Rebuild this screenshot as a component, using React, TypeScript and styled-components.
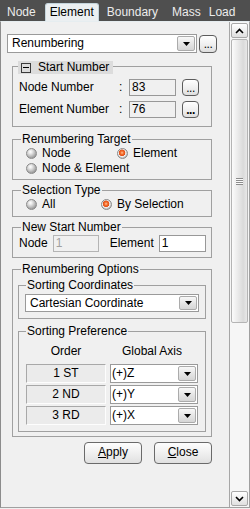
import React from "react";
import styled, { createGlobalStyle } from "styled-components";

const GlobalStyle = createGlobalStyle`
  html, body { margin: 0; padding: 0; }
  body {
    background: #f0f0f0;
    font-family: "Liberation Sans", Arial, sans-serif;
    font-size: 12px;
    color: #000;
  }
  * { box-sizing: border-box; }
`;

const Window = styled.div`
  width: 250px;
  height: 509px;
  display: flex;
  flex-direction: column;
  background: #f0f0f0;
  overflow: hidden;
`;

const TabBar = styled.div`
  height: 21px;
  flex: none;
  display: flex;
  align-items: flex-end;
  background: #4f4f4f;
`;

const Tab = styled.div<{ $active?: boolean; $ml: number }>`
  height: 18px;
  flex: none;
  margin-left: ${(p) => p.$ml}px;
  padding: 0 4px;
  line-height: 17px;
  white-space: nowrap;
  border: 1px solid ${(p) => (p.$active ? "#c4d4db" : "transparent")};
  border-bottom: 0;
  border-radius: 3px 3px 0 0;
  background: ${(p) => (p.$active ? "#ebeff1" : "transparent")};
  color: ${(p) => (p.$active ? "#000" : "#ececec")};
`;

const Panel = styled.div`
  height: 487px;
  flex: none;
  display: flex;
  border: 1px solid #a0a0a0;
  border-top-color: #e6edf0;
  border-left-color: #8c8c8c;
`;

const Content = styled.div`
  flex: 1;
  min-width: 0;
  padding: 12px 0 0 6px;
  display: flex;
  flex-direction: column;
  align-items: flex-start;
`;

const TopRow = styled.div`
  display: flex;
  align-items: center;
  gap: 2px;
`;

const Combo = styled.div<{ $h: number; $w?: number }>`
  display: flex;
  height: ${(p) => p.$h}px;
  width: ${(p) => (p.$w ? `${p.$w}px` : "auto")};
  border: 1px solid #9a9a9a;
  background: #fff;
  padding: 1px;
`;

const ComboText = styled.span<{ $pl: number }>`
  flex: 1;
  display: flex;
  align-items: center;
  padding-left: ${(p) => p.$pl}px;
  line-height: 15px;
  white-space: nowrap;
  overflow: hidden;
`;

const DropBtn = styled.span`
  width: 18px;
  flex: none;
  display: flex;
  align-items: center;
  justify-content: center;
  border: 1px solid #ababab;
  border-radius: 2px;
  background: linear-gradient(#f8f8f8, #e4e4e4 55%, #d6d6d6);
`;

const DownArrow = () => (
  <svg width="7" height="4" viewBox="0 0 7 4">
    <polygon points="0,0 7,0 3.5,4" fill="#000" />
  </svg>
);

const DotsBtn = styled.span<{ $size: number; $focus?: boolean }>`
  width: ${(p) => p.$size}px;
  height: ${(p) => p.$size}px;
  display: flex;
  align-items: center;
  justify-content: center;
  border: 1px solid #5c5c5c;
  border-radius: 4px;
  background: linear-gradient(#ffffff, #efefef 55%, #dedede);
  line-height: 14px;
  font-size: 12px;
  font-weight: ${(p) => (p.$focus ? 700 : 400)};
  letter-spacing: -0.5px;
`;

const Groups = styled.div`
  width: 200px;
  margin-left: 5px;
  display: flex;
  flex-direction: column;
`;

const Group = styled.div<{ $mt?: number; $pb?: number; $mx?: number }>`
  display: flex;
  flex-direction: column;
  border: 1px solid #a0a0a0;
  margin: ${(p) => p.$mt ?? 0}px ${(p) => p.$mx ?? 0}px 0;
  padding-bottom: ${(p) => p.$pb ?? 0}px;
`;

const Legend = styled.div<{ $ml?: number }>`
  align-self: flex-start;
  height: 14px;
  line-height: 14px;
  margin: -8px 0 0 ${(p) => p.$ml ?? 8}px;
  padding: 0 1px;
  background: #f0f0f0;
  white-space: nowrap;
`;

const HeadLegend = styled.div`
  align-self: flex-start;
  display: flex;
  align-items: center;
  height: 13px;
  line-height: 13px;
  margin: -6px 0 0 5px;
  padding: 0 4px 0 3px;
  background: #dcdcdc;
  white-space: nowrap;
`;

const MinusBox = styled.span`
  width: 10px;
  height: 10px;
  margin-right: 7px;
  border: 1px solid #3a3a3a;
  display: flex;
  align-items: center;
  justify-content: center;
  &::after {
    content: "";
    width: 6px;
    height: 1px;
    background: #000;
  }
`;

const FieldGrid = styled.div`
  display: grid;
  grid-template-columns: 100px 10px 53px 17px;
  grid-auto-rows: 17px;
  row-gap: 5px;
  align-items: center;
  margin-top: 5px;
  padding-left: 6px;
`;

const Label = styled.span`
  line-height: 15px;
  white-space: nowrap;
`;

const Field = styled.span<{ $w: number; $tone: "read" | "white" | "disabled" }>`
  width: ${(p) => p.$w}px;
  height: 17px;
  padding-left: 2px;
  line-height: 15px;
  border: 1px solid ${(p) => (p.$tone === "disabled" ? "#b4b4b4" : "#989898")};
  background: ${(p) => (p.$tone === "white" ? "#fff" : "#f0f0f0")};
  color: ${(p) => (p.$tone === "disabled" ? "#a0a0a0" : "#000")};
`;

const RadioGrid = styled.div<{ $col: number }>`
  display: grid;
  grid-template-columns: ${(p) => p.$col}px auto;
  grid-auto-rows: 15px;
  padding-left: 13px;
`;

const RadioItem = styled.label`
  display: flex;
  align-items: center;
  line-height: 15px;
  white-space: nowrap;
`;

const RadioDot = styled.span<{ $on?: boolean }>`
  width: 11px;
  height: 11px;
  flex: none;
  margin-right: 5px;
  border-radius: 50%;
  border: 1px solid #8a8a8a;
  background: ${(p) =>
    p.$on
      ? "radial-gradient(circle at 45% 42%, #ffc49a 0, #f46d2c 1.6px, #e0501a 3px, #f3f3f3 3.6px, #d2d2d2 4.6px, #b4b4b4 5.5px)"
      : "radial-gradient(circle at 38% 32%, #ffffff 0, #e8e8e8 1.8px, #c6c6c6 3.8px, #9e9e9e 6px)"};
`;

const InlineRow = styled.div`
  display: flex;
  align-items: center;
  height: 17px;
  margin-top: 1px;
  padding-left: 6px;
`;

const InlineLabel = styled.span<{ $ml?: number }>`
  margin: 0 5px 0 ${(p) => p.$ml ?? 0}px;
  line-height: 15px;
`;

const CoordCombo = styled(Combo)`
  margin: 2px 6px 0;
`;

const PrefGrid = styled.div`
  display: grid;
  grid-template-columns: 80px 88px;
  grid-auto-rows: 19px;
  column-gap: 4px;
  row-gap: 2px;
  margin-top: 5px;
  padding-left: 7px;
`;

const HeadCell = styled.span<{ $shift?: number }>`
  align-self: start;
  text-align: center;
  line-height: 16px;
  padding-right: ${(p) => p.$shift ?? 0}px;
  white-space: nowrap;
`;

const OrderCell = styled.span`
  text-align: center;
  line-height: 17px;
  background: #ebebeb;
  border: 1px solid;
  border-color: #a8a8a8 #fdfdfd #fdfdfd #a8a8a8;
`;

const ButtonRow = styled.div`
  display: flex;
  justify-content: flex-end;
  gap: 12px;
  margin-top: 5px;
`;

const PushButton = styled.button`
  width: 58px;
  height: 22px;
  padding: 0 0 2px;
  border: 1px solid #6a6a6a;
  border-radius: 4px;
  background: linear-gradient(#fdfdfd, #f0f0f0 50%, #e0e0e0);
  font-family: inherit;
  font-size: 12px;
  line-height: 18px;
  color: #000;
`;

const ScrollBar = styled.div`
  width: 20px;
  flex: none;
  display: flex;
  flex-direction: column;
  align-items: center;
  border-left: 1px solid #a6a6a6;
  background: #f6f6f6;
  padding: 1px 0;
`;

const ScrollButton = styled.span`
  width: 17px;
  height: 15px;
  flex: none;
  display: flex;
  align-items: center;
  justify-content: center;
  border: 1px solid #a8a8a8;
  border-radius: 2px;
  background: linear-gradient(#ffffff, #ececec 60%, #e0e0e0);
`;

const Thumb = styled.span`
  width: 17px;
  height: 284px;
  flex: none;
  margin-top: 1px;
  display: flex;
  align-items: center;
  justify-content: center;
  border: 1px solid #b4b4b4;
  border-radius: 2px;
  background: linear-gradient(to right, #fbfbfb, #ececec 35%, #dadada 75%, #e8e8e8);
`;

const Grip = styled.span`
  width: 7px;
  height: 7px;
  background: repeating-linear-gradient(to bottom, #8c8c8c 0 1px, #fafafa 1px 2px);
`;

const Spacer = styled.span`
  flex: 1;
`;

const Chevron = ({ up }: { up?: boolean }) => (
  <svg width="9" height="6" viewBox="0 0 9 6">
    <polyline
      points={up ? "1,5 4.5,1.5 8,5" : "1,1 4.5,4.5 8,1"}
      fill="none"
      stroke="#000"
      strokeWidth="1.6"
    />
  </svg>
);

const tabs = [
  { name: "Node", ml: 2 },
  { name: "Element", ml: 4, active: true },
  { name: "Boundary", ml: 3 },
  { name: "Mass", ml: 4 },
  { name: "Load", ml: -2 },
];

const prefs = [
  { order: "1 ST", axis: "(+)Z" },
  { order: "2 ND", axis: "(+)Y" },
  { order: "3 RD", axis: "(+)X" },
];

export default function App() {
  return (
    <>
      <GlobalStyle />
      <Window>
        <TabBar>
          {tabs.map((t) => (
            <Tab key={t.name} $ml={t.ml} $active={t.active}>
              {t.name}
            </Tab>
          ))}
        </TabBar>
        <Panel>
          <Content>
            <TopRow>
              <Combo $h={19} $w={190}>
                <ComboText $pl={3}>Renumbering</ComboText>
                <DropBtn>
                  <DownArrow />
                </DropBtn>
              </Combo>
              <DotsBtn $size={18}>...</DotsBtn>
            </TopRow>
            <Groups>
              <Group $mt={13} $pb={8}>
                <HeadLegend>
                  <MinusBox />
                  Start Number
                </HeadLegend>
                <FieldGrid>
                  <Label>Node Number</Label>
                  <Label>:</Label>
                  <Field $w={47} $tone="read">83</Field>
                  <DotsBtn $size={17}>...</DotsBtn>
                  <Label>Element Number</Label>
                  <Label>:</Label>
                  <Field $w={47} $tone="read">76</Field>
                  <DotsBtn $size={17} $focus>...</DotsBtn>
                </FieldGrid>
              </Group>

              <Group $mt={12} $pb={3}>
                <Legend>Renumbering Target</Legend>
                <RadioGrid $col={91}>
                  <RadioItem>
                    <RadioDot />
                    Node
                  </RadioItem>
                  <RadioItem>
                    <RadioDot $on />
                    Element
                  </RadioItem>
                  <RadioItem>
                    <RadioDot />
                    Node &amp; Element
                  </RadioItem>
                </RadioGrid>
              </Group>

              <Group $mt={10} $pb={4}>
                <Legend>Selection Type</Legend>
                <RadioGrid $col={75}>
                  <RadioItem>
                    <RadioDot />
                    All
                  </RadioItem>
                  <RadioItem>
                    <RadioDot $on />
                    By Selection
                  </RadioItem>
                </RadioGrid>
              </Group>

              <Group $mt={10} $pb={5}>
                <Legend>New Start Number</Legend>
                <InlineRow>
                  <InlineLabel>Node</InlineLabel>
                  <Field $w={46} $tone="disabled">1</Field>
                  <InlineLabel $ml={11}>Element</InlineLabel>
                  <Field $w={47} $tone="white">1</Field>
                </InlineRow>
              </Group>

              <Group $mt={11} $pb={4}>
                <Legend>Renumbering Options</Legend>
                <Group $mt={9} $mx={5} $pb={6}>
                  <Legend $ml={7}>Sorting Coordinates</Legend>
                  <CoordCombo $h={18}>
                    <ComboText $pl={3}>Cartesian Coordinate</ComboText>
                    <DropBtn>
                      <DownArrow />
                    </DropBtn>
                  </CoordCombo>
                </Group>
                <Group $mt={12} $mx={5} $pb={6}>
                  <Legend $ml={7}>Sorting Preference</Legend>
                  <PrefGrid>
                    <HeadCell>Order</HeadCell>
                    <HeadCell $shift={4}>Global Axis</HeadCell>
                    {prefs.map((p) => (
                      <React.Fragment key={p.order}>
                        <OrderCell>{p.order}</OrderCell>
                        <Combo $h={19}>
                          <ComboText $pl={0}>{p.axis}</ComboText>
                          <DropBtn>
                            <DownArrow />
                          </DropBtn>
                        </Combo>
                      </React.Fragment>
                    ))}
                  </PrefGrid>
                </Group>
              </Group>

              <ButtonRow>
                <PushButton>
                  <u>A</u>pply
                </PushButton>
                <PushButton>
                  <u>C</u>lose
                </PushButton>
              </ButtonRow>
            </Groups>
          </Content>
          <ScrollBar>
            <ScrollButton>
              <Chevron up />
            </ScrollButton>
            <Thumb>
              <Grip />
            </Thumb>
            <Spacer />
            <ScrollButton>
              <Chevron />
            </ScrollButton>
          </ScrollBar>
        </Panel>
      </Window>
    </>
  );
}
